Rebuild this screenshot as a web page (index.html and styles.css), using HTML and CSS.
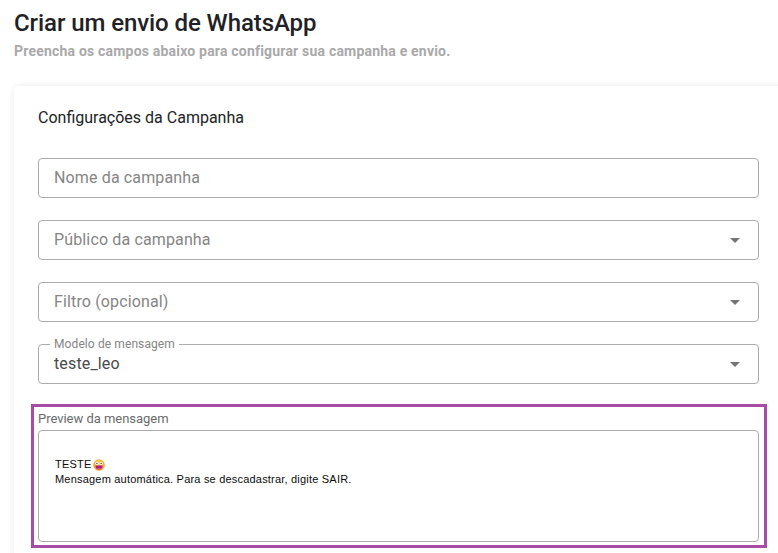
FILE: index.html
```html
<!DOCTYPE html>
<html lang="pt">
<head>
<meta charset="utf-8">
<title>Criar um envio de WhatsApp</title>
<link rel="stylesheet" href="styles.css">
</head>
<body>
<main class="page">
  <header class="head">
    <h1 class="title">Criar um envio de WhatsApp</h1>
    <p class="subtitle">Preencha os campos abaixo para configurar sua campanha e envio.</p>
  </header>
  <section class="card">
    <h2 class="card-title">Configurações da Campanha</h2>
    <div class="fields">
      <div class="field"><span class="placeholder">Nome da campanha</span></div>
      <div class="field"><span class="placeholder">Público da campanha</span><span class="caret"></span></div>
      <div class="field"><span class="placeholder">Filtro (opcional)</span><span class="caret"></span></div>
      <div class="field">
        <span class="float-label">Modelo de mensagem</span>
        <span class="value">teste_leo</span><span class="caret"></span>
      </div>
    </div>
    <div class="preview">
      <div class="preview-label">Preview da mensagem</div>
      <div class="preview-box">
        <div class="msg-line">TESTE<svg class="emoji" viewBox="0 0 12 12" aria-hidden="true"><defs><radialGradient id="face" cx="50%" cy="38%" r="62%"><stop offset="0%" stop-color="#fdd85e"/><stop offset="100%" stop-color="#f29a1f"/></radialGradient></defs><circle cx="6" cy="6" r="5.8" fill="url(#face)"/><circle cx="3.8" cy="4.3" r="1.6" fill="#fff"/><circle cx="8.2" cy="4.3" r="1.6" fill="#fff"/><circle cx="3.9" cy="4.4" r=".7" fill="#4a3a4a"/><circle cx="8.1" cy="4.4" r=".7" fill="#4a3a4a"/><path d="M2.4 6.4h7.2c0 2.6-1.6 4-3.6 4s-3.6-1.4-3.6-4z" fill="#b5178a"/><path d="M4 9.2c.9-.7 3.1-.7 4 0-.9 1-3.1 1-4 0z" fill="#f0568c"/></svg></div>
        <div class="msg-line">Mensagem automática. Para se descadastrar, digite SAIR.</div>
      </div>
    </div>
  </section>
</main>
</body>
</html>
```
FILE: styles.css
```css
html, body {
  margin: 0;
  height: 100%;
  overflow: hidden;
  background: #fff;
}
body {
  font-family: Roboto, "Liberation Sans", sans-serif;
}
.page {
  padding-left: 14px;
}
.head {
  height: 86px;
}
.title {
  margin: 0;
  padding-top: 7px;
  font-size: 24px;
  line-height: 32px;
  font-weight: 500;
  letter-spacing: -.08px;
  color: #1f2125;
}
.subtitle {
  margin: 0;
  padding-top: 2px;
  font-size: 14px;
  line-height: 20px;
  font-weight: 700;
  letter-spacing: .2px;
  color: #a9a9a9;
}
.card {
  width: 721px;
  padding: 0 24px 24px;
  background: #fff;
  border-radius: 4px;
  box-shadow: 0 0 6px rgba(0, 0, 0, .09);
}
.card-title {
  margin: 0;
  padding: 21px 0 0;
  height: 51px;
  font-size: 16px;
  line-height: 22px;
  font-weight: 400;
  color: #212326;
}
.fields {
  display: flex;
  flex-direction: column;
  gap: 22px;
}
.field {
  position: relative;
  box-sizing: border-box;
  height: 40px;
  padding: 0 15px 2px;
  display: flex;
  align-items: center;
  justify-content: space-between;
  border: 1px solid #acacac;
  border-radius: 4px;
  font-size: 16px;
  letter-spacing: .14px;
}
.placeholder {
  color: #858585;
}
.value {
  color: #4a4a4a;
}
.caret {
  width: 0;
  height: 0;
  margin: 2px 3px 0 0;
  border-left: 5px solid transparent;
  border-right: 5px solid transparent;
  border-top: 5px solid #757575;
}
.float-label {
  position: absolute;
  top: -8px;
  left: 11px;
  padding: 0 4px;
  background: #fff;
  font-size: 12px;
  line-height: 14px;
  letter-spacing: .1px;
  color: #858585;
}
.preview {
  box-sizing: border-box;
  width: 736px;
  margin: 20px 0 0 -7px;
  padding: 0 5px 3px 4px;
  border: 3px solid #a64ca6;
}
.preview-label {
  height: 23px;
  font-size: 13px;
  line-height: 23px;
  letter-spacing: -.03px;
  color: #6b6b6b;
}
.preview-box {
  box-sizing: border-box;
  height: 112px;
  padding: 26px 16px 0;
  border: 1px solid #acacac;
  border-radius: 4px;
}
.msg-line {
  display: flex;
  align-items: center;
  height: 15px;
  font-family: "Liberation Sans", Arial, sans-serif;
  font-size: 11px;
  line-height: 15px;
  letter-spacing: .2px;
  color: #0c0c0c;
}
.emoji {
  width: 12px;
  height: 12px;
  margin-left: 2px;
}
```
